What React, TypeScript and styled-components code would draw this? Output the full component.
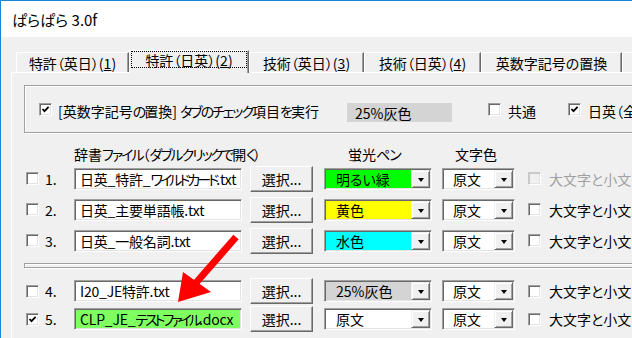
import React from "react";
import styled, { createGlobalStyle } from "styled-components";

const Global = createGlobalStyle`
  html, body { margin: 0; padding: 0; background: #f0f0f0; }
  body {
    font-family: "Noto Sans CJK JP", "Noto Sans", sans-serif;
    font-size: 14px;
    color: #000;
    font-feature-settings: "palt";
  }
  #root { width: 632px; height: 338px; overflow: hidden; }
`;

const Window = styled.div`
  position: relative;
  box-sizing: border-box;
  width: 632px;
  height: 338px;
  overflow: hidden;
  background: #f0f0f0;
  border-top: 1px solid #1883d7;
  border-left: 1px solid #1883d7;
`;

const TitleBar = styled.div`
  height: 36px;
  background: #fff;
  display: flex;
  align-items: center;
  padding-left: 11px;
  font-size: 15px;
  line-height: 1;
`;

const Body = styled.div`
  padding-left: 10px;
`;

const TabStrip = styled.div`
  position: relative;
  z-index: 1;
  display: flex;
  align-items: flex-end;
  height: 22px;
  margin-top: 13px;
  padding-left: 5px;
`;

const Tab = styled.div<{ $w: number; $active?: boolean }>`
  box-sizing: border-box;
  flex: none;
  width: ${(p) => p.$w}px;
  height: ${(p) => (p.$active ? 23 : 20)}px;
  margin-bottom: ${(p) => (p.$active ? -1 : 0)}px;
  padding-bottom: ${(p) => (p.$active ? 5 : 0)}px;
  background: #f0f0f0;
  border-top: 1px solid #fff;
  border-left: 1px solid #fff;
  border-right: 1px solid #696969;
  box-shadow: inset -1px 0 0 #a0a0a0;
  display: flex;
  align-items: center;
  justify-content: center;
  line-height: 1;
  white-space: nowrap;
`;

const FocusLabel = styled.span`
  box-sizing: border-box;
  width: calc(100% - 4px);
  height: 15px;
  display: flex;
  align-items: center;
  justify-content: center;
  outline: 1px dotted #000;
`;

const Panel = styled.div`
  height: 300px;
  border-top: 1px solid #fff;
  border-left: 1px solid #fff;
  padding: 12px 0 0 12px;
`;

const GroupBox = styled.div`
  box-sizing: border-box;
  width: 700px;
  height: 48px;
  border: 1px solid #a0a0a0;
  box-shadow: inset 1px 1px 0 #fff, 1px 1px 0 #fff;
  display: flex;
  align-items: flex-start;
  padding: 17px 0 0 14px;
  white-space: nowrap;
`;

const GroupLabel = styled.span<{ $w: number; $ml: number }>`
  flex: none;
  width: ${(p) => p.$w}px;
  margin-left: ${(p) => p.$ml}px;
  line-height: 17px;
`;

const GrayTag = styled.span`
  box-sizing: border-box;
  flex: none;
  width: 105px;
  height: 19px;
  padding-left: 8px;
  background: #d4d4d4;
  display: flex;
  align-items: center;
  line-height: 1;
`;

const Spacer = styled.span<{ $w: number }>`
  flex: none;
  width: ${(p) => p.$w}px;
`;

const Grid = styled.div<{ $h: number }>`
  display: grid;
  grid-template-columns: 19px 29px 176px 74px 118px 86px 1fr;
  align-items: center;
  height: ${(p) => p.$h}px;
  padding-left: 2px;
  white-space: nowrap;
`;

const HeaderCell = styled.span<{ $col: number; $pl?: number }>`
  grid-column: ${(p) => p.$col};
  padding-left: ${(p) => p.$pl ?? 0}px;
  line-height: 18px;
`;

const Rows = styled.div<{ $mt: number }>`
  margin-top: ${(p) => p.$mt}px;
`;

const NumLabel = styled.span`
  line-height: 1;
`;

const Kana = styled.span<{ $ls: number }>`
  letter-spacing: ${(p) => p.$ls}px;
`;

const Sunken = styled.div<{ $w: number; $bg?: string }>`
  box-sizing: border-box;
  width: ${(p) => p.$w}px;
  height: 22px;
  background: ${(p) => p.$bg ?? "#fff"};
  border-top: 1px solid #a0a0a0;
  border-left: 1px solid #a0a0a0;
  border-bottom: 1px solid #fff;
  border-right: 1px solid #fff;
  box-shadow: inset 1px 1px 0 #696969, inset -1px -1px 0 #e3e3e3;
`;

const TextBox = styled(Sunken)`
  display: flex;
  align-items: center;
  padding-left: 5px;
  overflow: hidden;
  line-height: 1;
  letter-spacing: -0.2px;
`;

const Combo = styled(Sunken)`
  display: flex;
  padding: 1px;
`;

const ComboField = styled.div<{ $bg: string; $pl: number }>`
  flex: 1;
  background: ${(p) => p.$bg};
  display: flex;
  align-items: center;
  padding-left: ${(p) => p.$pl}px;
  line-height: 1;
  overflow: hidden;
`;

const ComboButton = styled.div`
  box-sizing: border-box;
  flex: none;
  width: 19px;
  background: #f0f0f0;
  border-top: 1px solid #f0f0f0;
  border-left: 1px solid #f0f0f0;
  border-right: 1px solid #696969;
  border-bottom: 1px solid #696969;
  box-shadow: inset 1px 1px 0 #fff, inset -1px -1px 0 #a0a0a0;
  display: flex;
  align-items: center;
  justify-content: center;
  padding-top: 2px;
`;

const Triangle = styled.span`
  width: 0;
  height: 0;
  border-left: 3.5px solid transparent;
  border-right: 3.5px solid transparent;
  border-top: 4px solid #000;
`;

const Button = styled.div`
  box-sizing: border-box;
  width: 63px;
  height: 26px;
  background: #f0f0f0;
  border-top: 1px solid #fff;
  border-left: 1px solid #fff;
  border-right: 1px solid #696969;
  border-bottom: 1px solid #696969;
  box-shadow: inset -1px -1px 0 #a0a0a0;
  display: flex;
  align-items: center;
  justify-content: center;
  line-height: 1;
`;

const CaseCell = styled.div<{ $disabled?: boolean }>`
  display: flex;
  align-items: center;
  gap: 8px;
  color: ${(p) => (p.$disabled ? "#a0a0a0" : "#000")};
  line-height: 1;
`;

const CheckBox = styled.span<{ $disabled?: boolean }>`
  box-sizing: border-box;
  flex: none;
  width: 13px;
  height: 13px;
  display: inline-flex;
  align-items: center;
  justify-content: center;
  background: ${(p) => (p.$disabled ? "#f0f0f0" : "#fff")};
  border-top: 1px solid ${(p) => (p.$disabled ? "#c8c8c8" : "#a0a0a0")};
  border-left: 1px solid ${(p) => (p.$disabled ? "#c8c8c8" : "#a0a0a0")};
  border-bottom: 1px solid #fff;
  border-right: 1px solid #fff;
  box-shadow: inset 1px 1px 0 ${(p) => (p.$disabled ? "#c8c8c8" : "#696969")},
    inset -1px -1px 0 #e3e3e3;
`;

const Separator = styled.div`
  box-sizing: border-box;
  width: 700px;
  height: 5px;
  margin-top: 7px;
  border: 1px solid #a0a0a0;
  box-shadow: inset 1px 1px 0 #fff, 1px 1px 0 #fff;
`;

const ArrowLayer = styled.svg`
  position: absolute;
  left: -1px;
  top: -1px;
  pointer-events: none;
`;

/* Narrow the kana runs, as the proportional kana of the original UI font are. */
const Jp: React.FC<{ text: string; ls: number }> = ({ text, ls }) => (
  <>
    {text.split(/([\u3041-\u30FF]+)/).map((part, i) =>
      i % 2 === 1 ? (
        <Kana key={i} $ls={ls}>
          {part}
        </Kana>
      ) : (
        <React.Fragment key={i}>{part}</React.Fragment>
      )
    )}
  </>
);

const Check: React.FC<{ checked?: boolean; disabled?: boolean }> = ({ checked, disabled }) => (
  <CheckBox $disabled={disabled}>
    {checked && (
      <svg width="9" height="9" viewBox="0 0 9 9">
        <path d="M1.5 4 L3.5 6.2 L7.6 1.8" stroke="#000" strokeWidth="1.8" fill="none" />
      </svg>
    )}
  </CheckBox>
);

type RowData = {
  n: number;
  checked?: boolean;
  file: string;
  fileBg?: string;
  color: string;
  colorBg: string;
  disabled?: boolean;
};

const rowsA: RowData[] = [
  { n: 1, file: "日英_特許_ワイルドカード.txt", color: "明るい緑", colorBg: "#00ff00", disabled: true },
  { n: 2, file: "日英_主要単語帳.txt", color: "黄色", colorBg: "#ffff00" },
  { n: 3, file: "日英_一般名詞.txt", color: "水色", colorBg: "#00ffff" },
];

const rowsB: RowData[] = [
  { n: 4, file: "I20_JE特許.txt", color: "25%灰色", colorBg: "#d4d4d4" },
  { n: 5, checked: true, file: "CLP_JE_テストファイル.docx", fileBg: "#80ff60", color: "原文", colorBg: "#fff" },
];

const DictRow: React.FC<{ row: RowData; h: number }> = ({ row, h }) => (
  <Grid $h={h}>
    <Check checked={row.checked} />
    <NumLabel>{row.n}.</NumLabel>
    <TextBox $w={168} $bg={row.fileBg}>
      <span>
        <Jp text={row.file} ls={-3} />
      </span>
    </TextBox>
    <Button>選択...</Button>
    <Combo $w={108}>
      <ComboField $bg={row.colorBg} $pl={10}>{row.color}</ComboField>
      <ComboButton><Triangle /></ComboButton>
    </Combo>
    <Combo $w={73}>
      <ComboField $bg="#fff" $pl={9}>原文</ComboField>
      <ComboButton><Triangle /></ComboButton>
    </Combo>
    <CaseCell $disabled={row.disabled}>
      <Check disabled={row.disabled} />
      <span>大文字と小文字を区別</span>
    </CaseCell>
  </Grid>
);

export default function App() {
  return (
    <>
      <Global />
      <Window>
        <TitleBar>ぱらぱら 3.0f</TitleBar>
        <Body>
          <TabStrip>
            <Tab $w={113}>特許（英日）(<u>1</u>)</Tab>
            <Tab $w={120} $active>
              <FocusLabel>特許（日英）(<u>2</u>)</FocusLabel>
            </Tab>
            <Tab $w={115}>技術（英日）(<u>3</u>)</Tab>
            <Tab $w={117}>技術（日英）(<u>4</u>)</Tab>
            <Tab $w={141}>英数字記号の置換</Tab>
            <Tab $w={60} />
          </TabStrip>
          <Panel>
            <GroupBox>
              <Check checked />
              <GroupLabel $w={289} $ml={6}>
                <Jp text="[英数字記号の置換] タブのチェック項目を実行" ls={-2} />
              </GroupLabel>
              <GrayTag>25%灰色</GrayTag>
              <Spacer $w={36} />
              <Check />
              <GroupLabel $w={60} $ml={7}>共通</GroupLabel>
              <Check checked />
              <GroupLabel $w={120} $ml={7}>日英（全角）</GroupLabel>
            </GroupBox>
            <Rows $mt={12}>
              <Grid $h={18}>
                <HeaderCell $col={3}>
                  <Jp text="辞書ファイル（ダブルクリックで開く）" ls={-2} />
                </HeaderCell>
                <HeaderCell $col={5} $pl={24}>
                  <Jp text="蛍光ペン" ls={-1} />
                </HeaderCell>
                <HeaderCell $col={6} $pl={13}>文字色</HeaderCell>
              </Grid>
            </Rows>
            <Rows $mt={0}>
              {rowsA.map((r) => (
                <DictRow key={r.n} row={r} h={31} />
              ))}
            </Rows>
            <Separator />
            <Rows $mt={9}>
              {rowsB.map((r) => (
                <DictRow key={r.n} row={r} h={28} />
              ))}
            </Rows>
          </Panel>
        </Body>
        <ArrowLayer width="632" height="338" viewBox="0 0 632 338">
          <line x1="236" y1="237" x2="195" y2="284" stroke="#ff0000" strokeWidth="7" />
          <polygon points="178,302 183,272 211,292" fill="#ff0000" />
        </ArrowLayer>
      </Window>
    </>
  );
}
